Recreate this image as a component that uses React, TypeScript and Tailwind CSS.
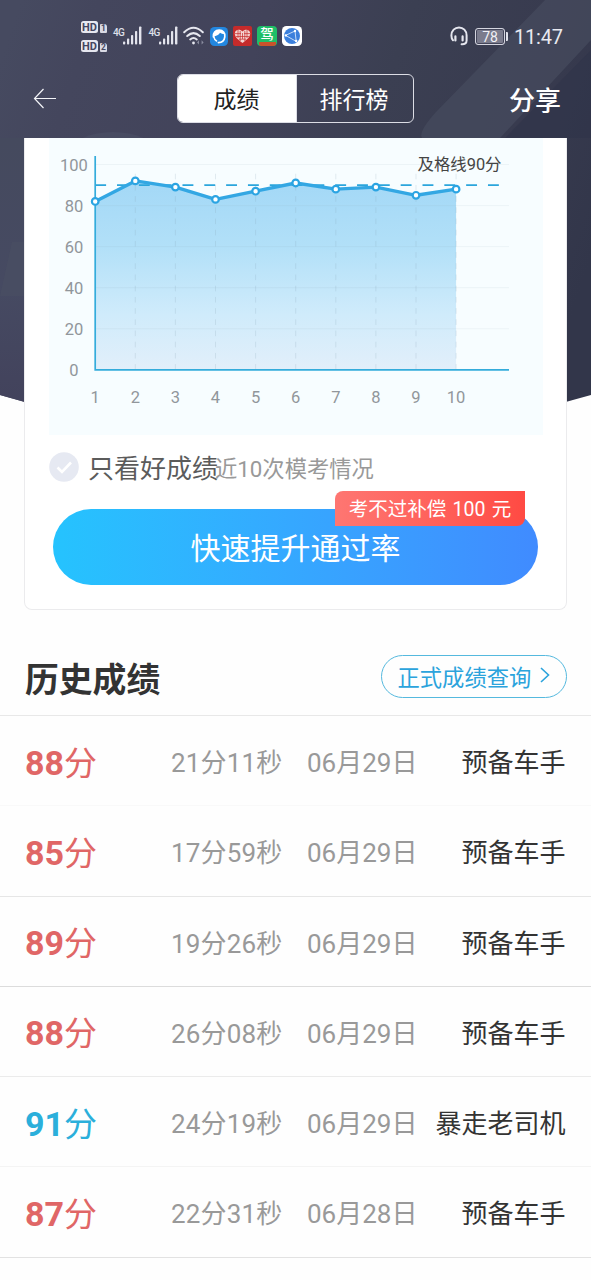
import React from 'react';

const scores = [82, 92, 89, 83, 87, 91, 88, 89, 85, 88];

// Chart geometry, in the coordinates of the 494x297 chart panel.
const X0 = 46.2;
const STEP = 40.1;
const Y0 = 231.8;
const UNIT = 2.053;
const px = (i: number) => X0 + STEP * i;
const py = (v: number) => Y0 - UNIT * v;

const history = [
  { score: 88, time: '21分11秒', date: '06月29日', title: '预备车手', line: 'border-[#f9f9f9]' },
  { score: 85, time: '17分59秒', date: '06月29日', title: '预备车手', line: 'border-[#e6e6e6]' },
  { score: 89, time: '19分26秒', date: '06月29日', title: '预备车手', line: 'border-[#dcdcdc]' },
  { score: 88, time: '26分08秒', date: '06月29日', title: '预备车手', line: 'border-[#ebebeb]' },
  { score: 91, time: '24分19秒', date: '06月29日', title: '暴走老司机', line: 'border-[#f4f4f4]' },
  { score: 87, time: '22分31秒', date: '06月28日', title: '预备车手', line: 'border-[#e2e2e2]' },
];

function Backdrop() {
  return (
    <svg className="absolute left-0 top-0" width="591" height="440" viewBox="0 0 591 440">
      <defs>
        <linearGradient id="sky" gradientUnits="userSpaceOnUse" x1="0" y1="60" x2="591" y2="260">
          <stop offset="0" stopColor="#464a60" />
          <stop offset="0.12" stopColor="#44465d" />
          <stop offset="0.38" stopColor="#42435a" />
          <stop offset="0.6" stopColor="#3b3f52" />
          <stop offset="0.82" stopColor="#383b4f" />
          <stop offset="1" stopColor="#32364a" />
        </linearGradient>
        <linearGradient id="edge" x1="0" y1="0" x2="0" y2="1">
          <stop offset="0" stopColor="#454a5e" />
          <stop offset="0.5" stopColor="#464a62" />
          <stop offset="1" stopColor="#41405a" />
        </linearGradient>
        <clipPath id="hero">
          <path d="M0 0H591V395Q295 483 0 395Z" />
        </clipPath>
      </defs>
      <g clipPath="url(#hero)">
        <rect width="591" height="440" fill="url(#sky)" />
        <rect y="138" width="25" height="300" fill="url(#edge)" />
        <path d="M545 0H591V40L500 138H422Q418 132 436 112Z" fill="#454a5c" opacity="0.8" />
        <path d="M591 50V138H505Z" fill="#30354a" opacity="0.7" />
        <ellipse cx="113" cy="152" rx="42" ry="20" fill="#50556a" opacity="0.45" />
        <path d="M12 242H25V296H0Z" fill="#4e5265" opacity="0.35" />
      </g>
    </svg>
  );
}

function HdBadge({ n }: { n: string }) {
  return (
    <div className="flex items-end gap-[2px]">
      <span className="flex h-[12px] w-[17px] items-center justify-center rounded-[2.5px] bg-[#e6e7ef] text-[11px] font-bold leading-none text-[#434660]">
        HD
      </span>
      <span className="flex h-[9px] w-[7px] items-center justify-center rounded-[1px] rounded-tr-[3px] bg-[#d9dae4] text-[8.5px] font-bold leading-none text-[#434660]">
        {n}
      </span>
    </div>
  );
}

function Signal() {
  return (
    <div className="flex h-[22px] w-[29.5px] items-start">
      <span className="w-[10px] origin-left text-[10px] font-medium leading-[13px] tracking-[-0.6px] text-[#dfe0ea]">4G</span>
      <svg width="19" height="20" viewBox="0 0 19 20" fill="#e3e4ed">
        <rect x="0" y="15.5" width="2.2" height="3" rx="0.8" />
        <rect x="4" y="12.5" width="2.2" height="6" rx="0.8" />
        <rect x="8" y="9" width="2.2" height="9.5" rx="0.8" />
        <rect x="12" y="5" width="2.2" height="13.5" rx="0.8" />
        <rect x="16" y="0.5" width="2.4" height="18" rx="0.8" />
      </svg>
    </div>
  );
}

function StatusBar() {
  return (
    <div className="relative flex h-[73px] items-start pl-[81px] pr-[27px]">
      <div className="flex w-[32px] flex-col gap-[7px] pt-[21px]">
        <HdBadge n="1" />
        <HdBadge n="2" />
      </div>
      <div className="flex gap-[6px] pt-[26px]">
        <Signal />
        <Signal />
      </div>
      <svg className="ml-[5px] mt-[26px]" width="22" height="20" viewBox="0 0 22 20" fill="none" stroke="#e6e7ef" strokeWidth="2" strokeLinecap="round">
        <path d="M1.2 6.2Q10.5 -2.6 19.8 6.2" />
        <path d="M4.2 10Q10.5 4.2 16.8 10" />
        <path d="M7.2 13.4Q10.5 10.6 13.8 13.4" />
        <circle cx="10.5" cy="17" r="1.4" fill="#e6e7ef" stroke="none" />
        <path d="M16 14.2V18.6L14 16.4ZM18.6 14.2V18.6L20.6 16.4Z" fill="#8b8da0" stroke="none" />
      </svg>
      <svg className="ml-[5px] mt-[27px]" width="18" height="19" viewBox="0 0 18 19">
        <rect width="18" height="19" rx="4.5" fill="#2387df" />
        <path d="M3.4 10C2.8 5.6 5.4 3.2 9.2 3.2S15.4 6 14.8 9.8C14.4 13 12 15.4 8.4 15.6" fill="none" stroke="#fff" strokeWidth="1.7" strokeLinecap="round" />
        <path d="M3.4 9.4C2.8 5.6 5.2 3 9.2 3C11.6 3 13.8 4.4 14.4 7C12.8 7 11.2 6.6 10 5.8C8.8 7.8 6.4 9.4 3.4 9.4Z" fill="#fff" />
        <path d="M3.8 9.6Q4.4 13 6.6 14" fill="none" stroke="#fff" strokeWidth="1.5" strokeLinecap="round" />
      </svg>
      <svg className="ml-[5px] mt-[26px]" width="19" height="20" viewBox="0 0 19 20">
        <rect width="19" height="20" rx="2" fill="#c52b2b" />
        <path d="M9.5 17C5 13.6 1.6 10.6 1.8 7.2C2 3.4 7 2.6 9.5 5.6C12 2.6 17 3.4 17.2 7.2C17.4 10.6 14 13.6 9.5 17Z" fill="#f4d3d0" />
        <path d="M5 4V12M14 4V12M9.5 7V13M2 7.6H8M11 7.6H17M3 10.5H16M6 13.2H13M7.2 5V15M11.8 5V15" stroke="#c52b2b" strokeWidth="0.7" fill="none" />
      </svg>
      <div className="ml-[5px] mt-[26px] flex h-[20px] w-[20px] flex-col items-center overflow-hidden rounded-[4px] bg-[#1fbf68]">
        <span className="h-[16px] text-[13.5px] font-medium leading-[17px] text-white">驾</span>
        <span className="h-[4px] w-[17px] rounded-b-[2px] bg-[#c9532c]" />
      </div>
      <svg className="ml-[5px] mt-[26px]" width="20" height="20" viewBox="0 0 20 20">
        <rect width="20" height="20" rx="4.5" fill="#fff" />
        <circle cx="10" cy="10" r="8" fill="#3b7fdc" />
        <path d="M3.6 9.4L13 5L14.2 15.4Z" fill="none" stroke="#d6e6fa" strokeWidth="0.9" />
        <circle cx="3.8" cy="9.4" r="1.2" fill="#fff" />
        <circle cx="13" cy="5" r="1.2" fill="#fff" />
        <circle cx="14.2" cy="15" r="1.2" fill="#fff" />
      </svg>
      <div className="flex-1" />
      <svg className="mt-[26px]" width="19" height="20" viewBox="0 0 19 20" fill="none" stroke="#e6e7ef" strokeWidth="2" strokeLinecap="round">
        <path d="M3 14.2C1.8 13 1.4 11.4 1.4 9.4C1.4 4.6 4.8 1.4 9 1.4S16.6 4.6 16.6 9.4V14.5C16.6 17 15 18.4 11.6 18.2" />
        <path d="M5.4 10.4V14.4M12.6 10.4V14.4" strokeWidth="2.2" />
      </svg>
      <div className="ml-[6px] mt-[28px] flex items-center gap-[1px]">
        <span className="flex h-[17px] w-[30px] items-center justify-center rounded-[3px] border border-[#d4d5df] bg-[#7b7c8d] text-[14px] leading-none text-[#f1f1f6] shadow-[inset_0_0_0_1px_#44465a]">78</span>
        <span className="h-[9px] w-[2px] rounded-r-[1px] bg-[#e0e1ea]" />
      </div>
      <span className="ml-[6px] mt-[25px] w-[50px] whitespace-nowrap text-[20px] leading-[25px] tracking-[-0.2px] text-[#e8e9f0]">11:47</span>
    </div>
  );
}

function NavBar() {
  return (
    <div className="relative flex h-[65px] items-start pl-[33px] pr-[30px]">
      <svg className="mt-[15px]" width="24" height="21" viewBox="0 0 24 21" fill="none" stroke="#f3f4f8" strokeWidth="1.2">
        <path d="M23 10.5H1.5M10.5 1L1.5 10.5L10.5 20" />
      </svg>
      <div className="ml-[120px] mt-[1px] flex h-[49px] w-[237px] overflow-hidden rounded-[6px] border border-[#dcdde5]">
        <div className="flex w-[118px] items-center justify-center bg-white pr-[1px] text-[23px] leading-none text-[#222]">
          <span className="mt-[4px]">成绩</span>
        </div>
        <div className="flex flex-1 items-center justify-center border-l border-[#dcdde5] pr-[2px] text-[23px] leading-none text-white">
          <span className="mt-[4px]">排行榜</span>
        </div>
      </div>
      <span className="ml-auto mt-[12px] text-[26px] font-medium leading-[32px] text-white">分享</span>
    </div>
  );
}

function Chart() {
  const points = scores.map((s, i) => `${px(i)},${py(s)}`).join(' ');
  return (
    <svg className="block" width="494" height="297" viewBox="0 0 494 297">
      <defs>
        <linearGradient id="fill" gradientUnits="userSpaceOnUse" x1="0" y1="43" x2="0" y2="232">
          <stop offset="0" stopColor="#a3d8f6" />
          <stop offset="0.35" stopColor="#b2e0f8" />
          <stop offset="0.7" stopColor="#cfebfb" />
          <stop offset="1" stopColor="#e2effa" />
        </linearGradient>
      </defs>
      <rect width="494" height="297" fill="#f7fdff" />
      <polygon points={`${px(0)},${Y0} ${points} ${px(9)},${Y0}`} fill="url(#fill)" />
      {[100, 80, 60, 40, 20].map((v) => (
        <line key={v} x1={X0} x2="460" y1={py(v)} y2={py(v)} stroke="#8797a4" strokeOpacity="0.09" />
      ))}
      {scores.map((_, i) =>
        i === 0 ? null : (
          <line key={i} x1={px(i)} x2={px(i)} y1={py(95.5)} y2={Y0} stroke="#7d9aab" strokeOpacity="0.19" strokeDasharray="5.6 5.6" />
        ),
      )}
      <line x1={X0} x2="452" y1={py(90)} y2={py(90)} stroke="#2ba5dc" strokeWidth="1.8" strokeDasharray="10.9 10.92" />
      <path d={`M${X0} 18V${Y0}H460`} fill="none" stroke="#34acdb" strokeWidth="1.7" />
      <polyline points={points} fill="none" stroke="#33a7e3" strokeWidth="3.4" strokeLinejoin="round" />
      {scores.map((s, i) => (
        <circle key={i} cx={px(i)} cy={py(s)} r="3.3" fill="#fff" stroke="#2ba4e2" strokeWidth="2.2" />
      ))}
      <g fill="#91969b" fontSize="16.5" textAnchor="middle">
        {[100, 80, 60, 40, 20, 0].map((v) => (
          <text key={v} x="25" y={py(v) + 6.2}>{v}</text>
        ))}
        {scores.map((_, i) => (
          <text key={i} x={px(i)} y="264.6">{i + 1}</text>
        ))}
      </g>
      <text x="368.5" y="31.5" fontSize="16.4" fill="#444">及格线90分</text>
    </svg>
  );
}

function SummaryCard() {
  return (
    <div className="relative mx-6 h-[472px] rounded-b-[8px] border-x border-b border-[#ebebed] bg-white px-6">
      <Chart />
      <div className="flex h-[74px] items-start">
        <svg className="mt-[17px]" width="30" height="30" viewBox="0 0 30 30">
          <circle cx="15" cy="15" r="14.8" fill="#e6e9f2" />
          <path d="M8.5 15.5L13 20L22 10.5" fill="none" stroke="#fff" strokeWidth="2.6" />
        </svg>
        <span className="ml-[9px] mt-[16px] text-[26px] leading-[36px] text-[#5b5b5b]">只看好成绩</span>
        <span className="-ml-[3px] mt-[18px] text-[22.3px] leading-[32px] text-[#999]">近10次模考情况</span>
      </div>
      <div className="relative ml-[4px] flex h-[76px] w-[485px] items-center justify-center rounded-full bg-gradient-to-r from-[#25c3fe] to-[#408bff]">
        <span className="mt-[3px] text-[30px] leading-none text-white">快速提升通过率</span>
        <span className="absolute -top-[18px] right-[13px] flex h-[35px] w-[190px] items-center justify-center rounded-br-[8px] rounded-tl-[8px] bg-gradient-to-r from-[#fe7672] to-[#ff4a43] pt-[3px] text-[19.5px] leading-none text-white [word-spacing:1.5px]">
          考不过补偿 100 元
        </span>
      </div>
    </div>
  );
}

export default function App() {
  return (
    <div className="relative h-[1280px] w-[591px] overflow-hidden bg-[#fefefe] font-['Roboto','Noto_Sans_CJK_SC',sans-serif]" lang="zh-CN">
      <Backdrop />
      <StatusBar />
      <NavBar />
      <SummaryCard />
      <section>
        <div className="flex h-[106px] items-end justify-between border-b border-[#e8e8e8] pb-[17px] pl-[25px] pr-[24.5px]">
          <h2 className="mb-[-5px] text-[33.8px] font-bold leading-[44px] text-[#333]">历史成绩</h2>
          <button className="flex h-[43px] w-[186px] items-center rounded-full border border-[#55b9de] pl-[16px] text-[22.3px] leading-none text-[#2ba3dc]">
            <span className="mt-[3px]">正式成绩查询</span>
            <svg className="mb-[3px] ml-[9px]" width="10" height="16" viewBox="0 0 10 16" fill="none" stroke="#2ba3dc" strokeWidth="1.6">
              <path d="M1 1L8.5 8L1 15" />
            </svg>
          </button>
        </div>
        {history.map((h, i) => (
          <div key={i} className={`grid h-[90.25px] grid-cols-[146px_136px_110px_1fr] items-center whitespace-nowrap border-b pl-[25px] pr-[25.5px] pt-[5px] text-[26px] leading-[36px] text-[#999] ${h.line}`}>
            <span className={h.score >= 90 ? 'text-[33px] text-[#2bafdb]' : 'text-[33px] text-[#e06666]'}>
              <b className="text-[34px] font-bold">{h.score}</b>分
            </span>
            <span className="tracking-[0.15px]">{h.time}</span>
            <span>{h.date}</span>
            <span className="justify-self-end text-[#333]">{h.title}</span>
          </div>
        ))}
      </section>
    </div>
  );
}
